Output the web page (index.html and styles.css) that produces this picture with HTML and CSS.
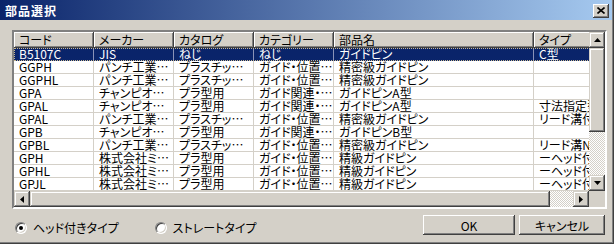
FILE: index.html
```html
<!DOCTYPE html>
<html lang="ja">
<head>
    <meta charset="UTF-8">
    <title>部品選択</title>
    <link rel="stylesheet" href="styles.css">
</head>
<body>
    <div class="window">
        <!-- Title Bar -->
        <div class="titlebar">
            <span class="title">部品選択</span>
            <button class="close-btn">
                <svg width="8" height="7" viewBox="0 0 8 7"><path d="M0.5 0.5 L7.5 6.5 M7.5 0.5 L0.5 6.5" stroke="#000" stroke-width="1.6"/></svg>
            </button>
        </div>

        <!-- Parts List -->
        <div class="listview">
            <div class="viewport">
                <div class="header">
                    <div class="hcell">コード</div>
                    <div class="hcell">メーカー</div>
                    <div class="hcell">カタログ</div>
                    <div class="hcell">カテゴリー</div>
                    <div class="hcell">部品名</div>
                    <div class="hcell">タイプ</div>
                </div>
                <div class="row selected">
                    <div class="cell">B5107C</div><div class="cell">JIS</div><div class="cell">ねじ</div><div class="cell">ねじ</div><div class="cell">ガイドピン</div><div class="cell">C型</div>
                </div>
                <div class="row">
                    <div class="cell">GGPH</div><div class="cell">パンチ工業株式会社</div><div class="cell">プラスチック金型用</div><div class="cell">ガイド・位置決め</div><div class="cell">精密級ガイドピン</div><div class="cell"></div>
                </div>
                <div class="row">
                    <div class="cell">GGPHL</div><div class="cell">パンチ工業株式会社</div><div class="cell">プラスチック金型用</div><div class="cell">ガイド・位置決め</div><div class="cell">精密級ガイドピン</div><div class="cell"></div>
                </div>
                <div class="row">
                    <div class="cell">GPA</div><div class="cell">チャンピオン商事</div><div class="cell">プラ型用</div><div class="cell">ガイド関連・位置決め</div><div class="cell">ガイドピンA型</div><div class="cell"></div>
                </div>
                <div class="row">
                    <div class="cell">GPAL</div><div class="cell">チャンピオン商事</div><div class="cell">プラ型用</div><div class="cell">ガイド関連・位置決め</div><div class="cell">ガイドピンA型</div><div class="cell">寸法指定型</div>
                </div>
                <div class="row">
                    <div class="cell">GPAL</div><div class="cell">パンチ工業株式会社</div><div class="cell">プラスチック金型用</div><div class="cell">ガイド・位置決め</div><div class="cell">精密級ガイドピン</div><div class="cell">リード溝付き</div>
                </div>
                <div class="row">
                    <div class="cell">GPB</div><div class="cell">チャンピオン商事</div><div class="cell">プラ型用</div><div class="cell">ガイド関連・位置決め</div><div class="cell">ガイドピンB型</div><div class="cell"></div>
                </div>
                <div class="row">
                    <div class="cell">GPBL</div><div class="cell">パンチ工業株式会社</div><div class="cell">プラスチック金型用</div><div class="cell">ガイド・位置決め</div><div class="cell">精密級ガイドピン</div><div class="cell">リード溝Nタイプ</div>
                </div>
                <div class="row">
                    <div class="cell">GPH</div><div class="cell">株式会社ミスミ</div><div class="cell">プラ型用</div><div class="cell">ガイド・位置決め</div><div class="cell">精級ガイドピン</div><div class="cell">ーヘッド付き</div>
                </div>
                <div class="row">
                    <div class="cell">GPHL</div><div class="cell">株式会社ミスミ</div><div class="cell">プラ型用</div><div class="cell">ガイド・位置決め</div><div class="cell">精級ガイドピン</div><div class="cell">ーヘッド付き</div>
                </div>
                <div class="row">
                    <div class="cell">GPJL</div><div class="cell">株式会社ミスミ</div><div class="cell">プラ型用</div><div class="cell">ガイド・位置決め</div><div class="cell">精級ガイドピン</div><div class="cell">ーヘッド付き</div>
                </div>
            </div>

            <!-- Vertical Scrollbar -->
            <div class="vscroll">
                <div class="sb-btn">
                    <svg width="7" height="4" viewBox="0 0 7 4"><polygon points="3.5,0 7,4 0,4" fill="#000"/></svg>
                </div>
                <div class="sb-thumb vthumb"></div>
                <div class="sb-track"></div>
                <div class="sb-btn">
                    <svg width="7" height="4" viewBox="0 0 7 4"><polygon points="0,0 7,0 3.5,4" fill="#000"/></svg>
                </div>
            </div>

            <!-- Horizontal Scrollbar -->
            <div class="hscroll">
                <div class="sb-btn">
                    <svg width="4" height="7" viewBox="0 0 4 7"><polygon points="4,0 4,7 0,3.5" fill="#000"/></svg>
                </div>
                <div class="sb-thumb hthumb"></div>
                <div class="sb-track"></div>
                <div class="sb-btn">
                    <svg width="4" height="7" viewBox="0 0 4 7"><polygon points="0,0 4,3.5 0,7" fill="#000"/></svg>
                </div>
            </div>
            <div class="corner"></div>
        </div>

        <!-- Footer -->
        <div class="footer">
            <div class="radios">
                <label class="radio-item">
                    <span class="radio checked"></span>ヘッド付きタイプ
                </label>
                <label class="radio-item">
                    <span class="radio"></span>ストレートタイプ
                </label>
            </div>
            <div class="buttons">
                <button class="btn ok-btn">OK</button>
                <button class="btn cancel-btn">キャンセル</button>
            </div>
        </div>
    </div>
</body>
</html>
```

FILE: styles.css
```css
body {
    margin: 0;
    padding: 0;
    font-family: "Noto Sans CJK JP", "Liberation Sans", sans-serif;
    font-feature-settings: "palt";
    font-size: 12px;
    color: #000;
    background-color: #d4d0c8;
}
/* Dialog Window */
.window {
    width: 614px;
    height: 244px;
    box-sizing: border-box;
    background-color: #d4d0c8;
    box-shadow: inset -1px -1px #404040, inset -2px -2px #808080;
    display: flex;
    flex-direction: column;
}
/* Title Bar */
.titlebar {
    height: 20px;
    margin-right: 2px;
    background: linear-gradient(to right, #0a246a, #a6caf0);
    display: flex;
    align-items: center;
    justify-content: space-between;
    padding: 1px 3px 0 5px;
    box-sizing: border-box;
}
.title {
    color: #fff;
    font-weight: bold;
    font-size: 12px;
    letter-spacing: 1px;
    line-height: 14px;
}
.close-btn {
    width: 16px;
    height: 14px;
    padding: 0;
    border: none;
    background-color: #d4d0c8;
    box-shadow: inset -1px -1px #404040, inset 1px 1px #fff, inset -2px -2px #808080;
    display: flex;
    align-items: center;
    justify-content: center;
}
/* List View */
.listview {
    margin: 10px 7px 0 12px;
    height: 179px;
    box-sizing: border-box;
    border: 2px solid;
    border-color: #808080 #fff #fff #808080;
    box-shadow: inset 1px 1px #404040, inset -1px -1px #d4d0c8;
    display: grid;
    grid-template-columns: 1fr 16px;
    grid-template-rows: 1fr 16px;
    background-color: #fff;
}
.viewport {
    overflow: hidden;
    background-color: #fff;
}
.header, .row {
    display: grid;
    grid-template-columns: 80px 80px 80px 80px 200px 110px;
    width: 630px;
}
.hcell {
    height: 16px;
    box-sizing: border-box;
    padding-left: 5px;
    line-height: 15px;
    background-color: #d4d0c8;
    border-right: 1px solid #404040;
    border-bottom: 1px solid #404040;
    box-shadow: inset 1px 1px #fff, inset -1px -1px #808080;
    white-space: nowrap;
    overflow: hidden;
}
.cell {
    height: 13px;
    box-sizing: border-box;
    padding-left: 5px;
    line-height: 12px;
    border-right: 1px solid #d4d0c8;
    border-bottom: 1px solid #d4d0c8;
    white-space: nowrap;
    overflow: hidden;
    text-overflow: ellipsis;
}
.row.selected {
    background-color: #0a246a;
    color: #fff;
    outline: 1px dotted #c8b890;
    outline-offset: -1px;
}
.row.selected .cell {
    border-right-color: #8a93b8;
    border-bottom-color: #0a246a;
}
/* Scrollbars */
.vscroll {
    display: flex;
    flex-direction: column;
}
.hscroll {
    display: flex;
}
.sb-btn {
    width: 16px;
    height: 16px;
    flex: none;
    box-sizing: border-box;
    background-color: #d4d0c8;
    box-shadow: inset -1px -1px #404040, inset 1px 1px #d4d0c8, inset -2px -2px #808080, inset 2px 2px #fff;
    display: flex;
    align-items: center;
    justify-content: center;
}
.sb-thumb {
    flex: none;
    background-color: #d4d0c8;
    box-shadow: inset -1px -1px #404040, inset 1px 1px #d4d0c8, inset -2px -2px #808080, inset 2px 2px #fff;
}
.vthumb {
    height: 84px;
}
.hthumb {
    width: 520px;
}
.sb-track {
    flex: 1;
    background: repeating-conic-gradient(#d4d0c8 0 25%, #fff 0 50%) 0 0 / 2px 2px;
}
.corner {
    background-color: #d4d0c8;
}
/* Footer */
.footer {
    display: flex;
    justify-content: space-between;
    margin: 6px 9px 0 15px;
}
.radios {
    display: flex;
    gap: 36px;
    margin-top: 6px;
}
.radio-item {
    display: flex;
    align-items: center;
    gap: 6px;
    line-height: 12px;
}
.radio {
    width: 12px;
    height: 12px;
    box-sizing: border-box;
    border-radius: 50%;
    background-color: #fff;
    border: 1px solid;
    border-color: #808080 #fff #fff #808080;
    box-shadow: inset 1px 1px #404040, inset -1px -1px #d4d0c8;
    display: flex;
    align-items: center;
    justify-content: center;
}
.radio.checked::after {
    content: "";
    width: 4px;
    height: 4px;
    border-radius: 50%;
    background-color: #000;
}
.buttons {
    display: flex;
    gap: 4px;
}
.btn {
    height: 20px;
    padding: 0;
    border: none;
    font-family: inherit;
    font-feature-settings: "palt";
    font-size: 12px;
    color: #000;
    background-color: #d4d0c8;
    box-shadow: inset -1px -1px #404040, inset 1px 1px #fff, inset -2px -2px #808080;
}
.ok-btn {
    width: 92px;
}
.cancel-btn {
    width: 86px;
}
```
